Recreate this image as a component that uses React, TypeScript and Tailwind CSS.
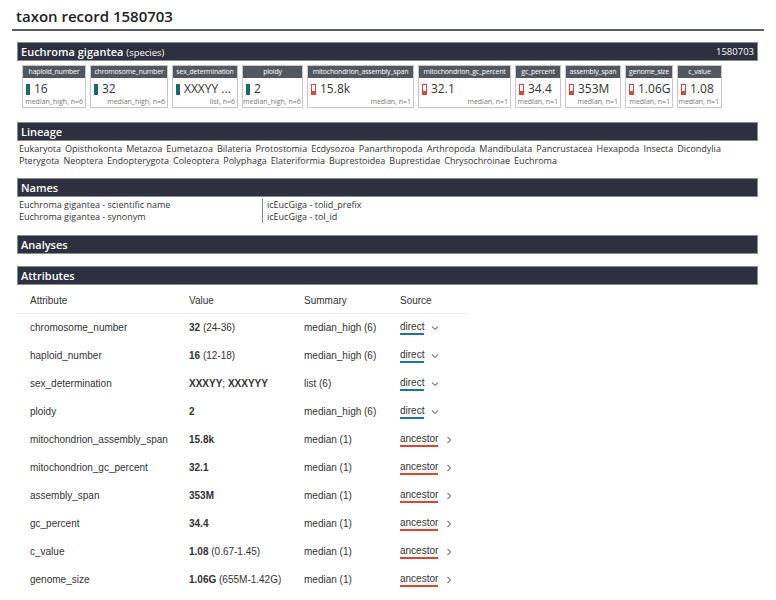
import React from 'react'

const cards = [
  { key: 'haploid_number', w: 64, value: '16', foot: 'median_high, n=6', src: 'direct' },
  { key: 'chromosome_number', w: 78, value: '32', foot: 'median_high, n=6', src: 'direct' },
  { key: 'sex_determination', w: 66, value: 'XXXYY ...', foot: 'list, n=6', src: 'direct' },
  { key: 'ploidy', w: 61, value: '2', foot: 'median_high, n=6', src: 'direct' },
  { key: 'mitochondrion_assembly_span', w: 107, value: '15.8k', foot: 'median, n=1', src: 'ancestor' },
  { key: 'mitochondrion_gc_percent', w: 93, value: '32.1', foot: 'median, n=1', src: 'ancestor' },
  { key: 'gc_percent', w: 46, value: '34.4', foot: 'median, n=1', src: 'ancestor' },
  { key: 'assembly_span', w: 56, value: '353M', foot: 'median, n=1', src: 'ancestor' },
  { key: 'genome_size', w: 48, value: '1.06G', foot: 'median, n=1', src: 'ancestor' },
  { key: 'c_value', w: 45, value: '1.08', foot: 'median, n=1', src: 'ancestor' },
]

const lineage = [
  'Eukaryota', 'Opisthokonta', 'Metazoa', 'Eumetazoa', 'Bilateria', 'Protostomia', 'Ecdysozoa',
  'Panarthropoda', 'Arthropoda', 'Mandibulata', 'Pancrustacea', 'Hexapoda', 'Insecta', 'Dicondylia',
  'Pterygota', 'Neoptera', 'Endopterygota', 'Coleoptera', 'Polyphaga', 'Elateriformia',
  'Buprestoidea', 'Buprestidae', 'Chrysochroinae', 'Euchroma',
]

const rows = [
  { name: 'chromosome_number', value: '32', range: '(24-36)', summary: 'median_high (6)', src: 'direct' },
  { name: 'haploid_number', value: '16', range: '(12-18)', summary: 'median_high (6)', src: 'direct' },
  { name: 'sex_determination', value: 'XXXYY', extra: 'XXXYYY', summary: 'list (6)', src: 'direct' },
  { name: 'ploidy', value: '2', summary: 'median_high (6)', src: 'direct' },
  { name: 'mitochondrion_assembly_span', value: '15.8k', summary: 'median (1)', src: 'ancestor' },
  { name: 'mitochondrion_gc_percent', value: '32.1', summary: 'median (1)', src: 'ancestor' },
  { name: 'assembly_span', value: '353M', summary: 'median (1)', src: 'ancestor' },
  { name: 'gc_percent', value: '34.4', summary: 'median (1)', src: 'ancestor' },
  { name: 'c_value', value: '1.08', range: '(0.67-1.45)', summary: 'median (1)', src: 'ancestor' },
  { name: 'genome_size', value: '1.06G', range: '(655M-1.42G)', summary: 'median (1)', src: 'ancestor' },
]

function SectionBar({ children, right }: { children: React.ReactNode; right?: string }) {
  return (
    <div className="h-[19px] bg-[#2e303d] border border-[#8a8c96] flex items-center justify-between px-[3px] text-white">
      <div className="text-[11px] font-semibold leading-none">{children}</div>
      {right && <div className="text-[9.5px] leading-none">{right}</div>}
    </div>
  )
}

function Bar({ src }: { src: string }) {
  if (src === 'direct') {
    return <span className="inline-block w-[4px] h-[11px] bg-[#116e69]" />
  }
  return (
    <span className="inline-flex flex-col justify-end w-[5px] h-[11px] border border-[#e0442c] bg-white">
      <span className="block h-[3px] bg-[#e0442c]" />
    </span>
  )
}

export default function App() {
  return (
    <div className="w-[776px] h-[600px] bg-white text-[#333] overflow-hidden" style={{ fontFamily: '"Open Sans", sans-serif' }}>
      {/* title */}
      <div className="mx-[12px] pt-[7px] pb-[4px] border-b-2 border-[#5a5c66]">
        <h1 className="pl-[4px] text-[15px] font-semibold text-[#222] leading-[18px]">taxon record 1580703</h1>
      </div>

      <div className="ml-[17px] w-[741px] mt-[11px]">
        <SectionBar right="1580703">
          Euchroma gigantea <span className="font-normal text-[9.5px]">(species)</span>
        </SectionBar>

        {/* summary cards */}
        <div className="flex pl-[5px] gap-[4px] mt-[4px]">
          {cards.map(c => (
            <div key={c.key} className="flex flex-col border border-[#c8c8cc] bg-white" style={{ width: c.w }}>
              <div className="h-[12px] bg-[#55575f] text-white text-[7px] tracking-[-0.2px] leading-[12px] text-center whitespace-nowrap overflow-hidden">
                {c.key}
              </div>
              <div className="flex items-center gap-[4px] pl-[3px] pt-[4px] h-[18px]">
                <Bar src={c.src} />
                <span className="text-[12px] leading-none text-[#333]">{c.value}</span>
              </div>
              <div className="text-right pr-[2px] text-[7px] leading-[11px] text-[#777] whitespace-nowrap">{c.foot}</div>
            </div>
          ))}
        </div>

        {/* lineage */}
        <div className="mt-[14px]">
          <SectionBar>Lineage</SectionBar>
          <div className="flex flex-wrap pl-[2px] pt-[2px] text-[9px] leading-[12px] w-[740px]">
            {lineage.map(l => (
              <span key={l} className="mr-[4px]">{l}</span>
            ))}
          </div>
        </div>

        {/* names */}
        <div className="mt-[11px]">
          <SectionBar>Names</SectionBar>
          <div className="flex pt-[2px] text-[9px] leading-[12px]">
            <div className="w-[245px] pl-[2px]">
              <div>Euchroma gigantea - scientific name</div>
              <div>Euchroma gigantea - synonym</div>
            </div>
            <div className="border-l border-[#888] pl-[4px]">
              <div>icEucGiga - tolid_prefix</div>
              <div>icEucGiga - tol_id</div>
            </div>
          </div>
        </div>

        <div className="mt-[12px]">
          <SectionBar>Analyses</SectionBar>
        </div>

        <div className="mt-[12px]">
          <SectionBar>Attributes</SectionBar>
          <table className="w-[451px] text-[10px] text-[#333] border-collapse" style={{ fontFamily: '"Liberation Sans", Arial, sans-serif' }}>
            <thead>
              <tr className="border-b border-[#eeeeee] h-[28px]">
                <th className="w-[159px] pl-[13px] pt-[3px] text-left font-normal">Attribute</th>
                <th className="w-[115px] pl-[13px] pt-[3px] text-left font-normal">Value</th>
                <th className="w-[96px] pl-[13px] pt-[3px] text-left font-normal">Summary</th>
                <th className="pl-[13px] pt-[3px] text-left font-normal">Source</th>
              </tr>
            </thead>
            <tbody>
              {rows.map(r => (
                <tr key={r.name} className="h-[28px]">
                  <td className="pl-[13px]">{r.name}</td>
                  <td className="pl-[13px] whitespace-nowrap">
                    <b>{r.value}</b>
                    {r.extra && <>; <b>{r.extra}</b></>}
                    {r.range && <> {r.range}</>}
                  </td>
                  <td className="pl-[13px]">{r.summary}</td>
                  <td className="pl-[13px]">
                    <span className="inline-flex items-center gap-[6px]">
                      <span className={r.src === 'direct' ? 'border-b-2 border-[#17807a] leading-[12px]' : 'border-b-2 border-[#e0442c] leading-[12px]'}>
                        {r.src}
                      </span>
                      {r.src === 'direct' ? (
                        <svg width="10" height="10" viewBox="0 0 10 10" fill="none" stroke="#888" strokeWidth="1.2">
                          <path d="M2 3.5l3 3 3-3" />
                        </svg>
                      ) : (
                        <svg width="10" height="10" viewBox="0 0 10 10" fill="none" stroke="#888" strokeWidth="1.2">
                          <path d="M3.5 2l3 3-3 3" />
                        </svg>
                      )}
                    </span>
                  </td>
                </tr>
              ))}
            </tbody>
          </table>
        </div>
      </div>
    </div>
  )
}
